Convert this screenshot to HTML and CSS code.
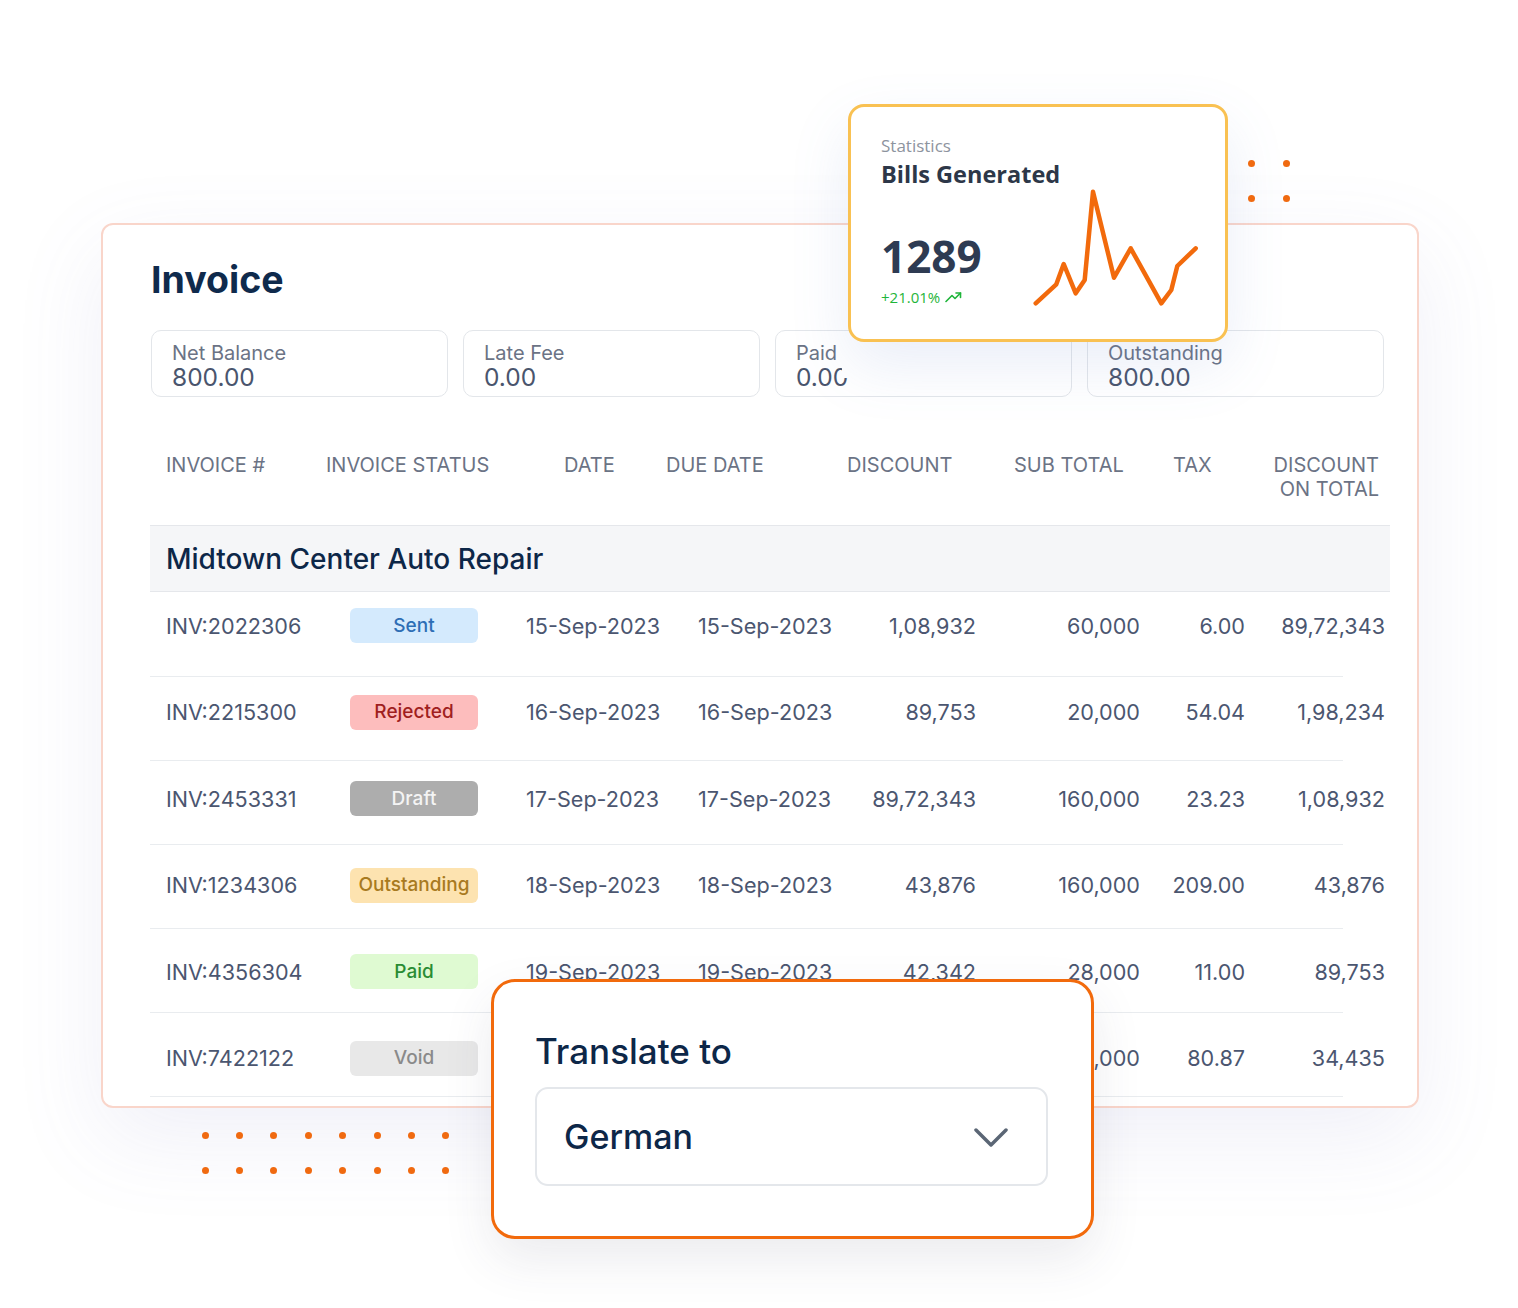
FILE: index.html
```html
<!DOCTYPE html>
<html lang="en">
<head>
<meta charset="utf-8">
<title>Invoice</title>
<link rel="stylesheet" href="styles.css">
</head>
<body>
<div class="page">
  <section class="invoice-card">
    <h1 class="title">Invoice</h1>
    <div class="summary">
      <div class="sum-box"><div class="sum-label">Net Balance</div><div class="sum-value">800.00</div></div>
      <div class="sum-box"><div class="sum-label">Late Fee</div><div class="sum-value">0.00</div></div>
      <div class="sum-box"><div class="sum-label">Paid</div><div class="sum-value">0.00</div></div>
      <div class="sum-box"><div class="sum-label">Outstanding</div><div class="sum-value">800.00</div></div>
    </div>
    <div class="table">
      <div class="thead">
        <div class="th">INVOICE #</div>
        <div class="th">INVOICE STATUS</div>
        <div class="th">DATE</div>
        <div class="th">DUE DATE</div>
        <div class="th">DISCOUNT</div>
        <div class="th">SUB TOTAL</div>
        <div class="th">TAX</div>
        <div class="th th-right">DISCOUNT<br>ON TOTAL</div>
      </div>
      <div class="group">Midtown Center Auto Repair</div>
      <div class="tbody">
        <div class="row">
          <div class="c">INV:2022306</div><div class="c"><span class="badge sent">Sent</span></div>
          <div class="c">15-Sep-2023</div><div class="c">15-Sep-2023</div>
          <div class="c r">1,08,932</div><div class="c r">60,000</div><div class="c r">6.00</div><div class="c r">89,72,343</div>
        </div>
        <div class="row">
          <div class="c">INV:2215300</div><div class="c"><span class="badge rejected">Rejected</span></div>
          <div class="c">16-Sep-2023</div><div class="c">16-Sep-2023</div>
          <div class="c r">89,753</div><div class="c r">20,000</div><div class="c r">54.04</div><div class="c r">1,98,234</div>
        </div>
        <div class="row">
          <div class="c">INV:2453331</div><div class="c"><span class="badge draft">Draft</span></div>
          <div class="c">17-Sep-2023</div><div class="c">17-Sep-2023</div>
          <div class="c r">89,72,343</div><div class="c r">160,000</div><div class="c r">23.23</div><div class="c r">1,08,932</div>
        </div>
        <div class="row">
          <div class="c">INV:1234306</div><div class="c"><span class="badge outstanding">Outstanding</span></div>
          <div class="c">18-Sep-2023</div><div class="c">18-Sep-2023</div>
          <div class="c r">43,876</div><div class="c r">160,000</div><div class="c r">209.00</div><div class="c r">43,876</div>
        </div>
        <div class="row">
          <div class="c">INV:4356304</div><div class="c"><span class="badge paid">Paid</span></div>
          <div class="c">19-Sep-2023</div><div class="c">19-Sep-2023</div>
          <div class="c r">42,342</div><div class="c r">28,000</div><div class="c r">11.00</div><div class="c r">89,753</div>
        </div>
        <div class="row">
          <div class="c">INV:7422122</div><div class="c"><span class="badge void">Void</span></div>
          <div class="c hidden-under">20-Sep-2023</div><div class="c hidden-under">20-Sep-2023</div>
          <div class="c r hidden-under">12,345</div><div class="c r">50,000</div><div class="c r">80.87</div><div class="c r">34,435</div>
        </div>
      </div>
    </div>
  </section>

  <div class="mask"></div>

  <div class="stats-card">
    <div class="stats-kicker">Statistics</div>
    <div class="stats-title">Bills Generated</div>
    <div class="stats-number">1289</div>
    <div class="stats-delta">+21.01%
      <svg class="trend" width="17" height="12" viewBox="0 0 17 12"><polyline points="1,10.5 7,4.5 10,7.5 15.5,2" fill="none" stroke="#1fb53a" stroke-width="1.6" stroke-linecap="round" stroke-linejoin="round"/><polyline points="11,2 15.5,2 15.5,6.5" fill="none" stroke="#1fb53a" stroke-width="1.6" stroke-linecap="round" stroke-linejoin="round"/></svg>
    </div>
    <svg class="spark" width="374" height="232" viewBox="0 0 374 232"><polyline points="184.7,196.3 205.3,177.3 212.7,157 224.7,186.3 233.7,173 242,84.7 263,170.7 279.7,141.3 310.3,196.3 320.3,183 326.3,159 344.7,141.3" fill="none" stroke="#f26a0c" stroke-width="4.5" stroke-linecap="round" stroke-linejoin="round"/></svg>
  </div>

  <div class="dots dots-top">
    <span></span><span></span><span></span><span></span>
  </div>
  <div class="dots dots-bottom">
    <span></span><span></span><span></span><span></span><span></span><span></span><span></span><span></span>
    <span></span><span></span><span></span><span></span><span></span><span></span><span></span><span></span>
  </div>

  <div class="translate-card">
    <div class="translate-label">Translate to</div>
    <div class="select">
      <span class="select-value">German</span>
      <svg class="chevron" width="34" height="20" viewBox="0 0 34 20"><polyline points="2,2 17,17 32,2" fill="none" stroke="#5b6675" stroke-width="3.5" stroke-linecap="round" stroke-linejoin="round"/></svg>
    </div>
  </div>
</div>
</body>
</html>
```
FILE: styles.css
```css
* { box-sizing: border-box; }
html, body { margin: 0; padding: 0; background: #ffffff; }
body { font-family: Inter, "Noto Sans", sans-serif; }

.page {
  position: relative;
  width: 1518px;
  height: 1308px;
  overflow: hidden;
  background: #ffffff;
}

.invoice-card {
  margin: 223px 0 0 101px;
  width: 1318px;
  height: 885px;
  border: 2px solid #f9d5ca;
  border-radius: 12px;
  background: #ffffff;
  padding: 33px 0 0 47px;
  box-shadow: 0 30px 90px rgba(110, 110, 190, 0.10);
}

.title {
  margin: 0 0 0 1px;
  font-size: 37.5px;
  line-height: 44px;
  font-weight: 700;
  color: #0f2a4c;
}

.summary {
  display: flex;
  gap: 15px;
  margin: 28px 0 0 1px;
}
.sum-box {
  width: 297px;
  height: 67px;
  border: 1px solid #e3e6ea;
  border-radius: 10px;
  padding: 11px 20px 0 20px;
}
.sum-label {
  font-size: 20px;
  line-height: 22px;
  color: #6b7385;
}
.sum-value {
  font-size: 24.5px;
  line-height: 26px;
  color: #4a556d;
}

.table { width: 1240px; margin-top: 56px; }

.thead {
  display: grid;
  grid-template-columns: 176px 238px 102px 181px 167px 159px 77px 129px;
  padding-bottom: 24px;
}
.th {
  font-size: 20px;
  line-height: 24px;
  color: #6b7385;
}
.thead .th:first-child { padding-left: 16px; }
.th-right { text-align: right; }

.group {
  height: 67px;
  border-top: 1px solid #e5e7eb;
  border-bottom: 1px solid #e5e7eb;
  background: #f5f6f8;
  display: flex;
  align-items: center;
  padding-left: 16px;
  font-size: 28px;
  font-weight: 500;
  color: #0d2748;
}

.tbody {
  height: 506px;
  padding-top: 16px;
  background-image: repeating-linear-gradient(to bottom, transparent 0, transparent 83px, #e9ecef 83px, #e9ecef 84px);
  background-size: 1193px 504px;
  background-position: 0 1px;
  background-repeat: no-repeat;
}

.row {
  width: 1235px;
  height: 86.6px;
  display: grid;
  grid-template-columns: 200px 176px 172px 160px 118px 164px 105px 140px;
  align-items: start;
}
.c {
  height: 35px;
  display: flex;
  align-items: center;
  font-size: 21.6px;
  line-height: 26px;
  color: #4b5670;
  white-space: nowrap;
}
.row .c:first-child { padding-left: 16px; }
.c.r { justify-content: flex-end; }
.hidden-under { visibility: hidden; }

.badge {
  display: flex;
  align-items: center;
  justify-content: center;
  width: 128px;
  height: 35px;
  border-radius: 6px;
  font-size: 19px;
  line-height: 22px;
  font-weight: 500;
}
.sent { background: #d4eafd; color: #2e6eb5; }
.rejected { background: #fdbdbd; color: #a01f1f; }
.draft { background: #adadad; color: #f4f4f4; }
.outstanding { background: #fde3b0; color: #a87a20; }
.paid { background: #dffad2; color: #2a8c34; }
.void { background: #e8e8e8; color: #8a8a8a; }

.mask {
  position: absolute;
  left: 842px;
  top: 342px;
  width: 34px;
  height: 36px;
  background: #ffffff;
}

.stats-card {
  position: absolute;
  left: 848px;
  top: 104px;
  width: 380px;
  height: 238px;
  border: 3px solid #f9c152;
  border-radius: 16px;
  background: #ffffff;
  padding: 29px 0 0 30px;
  font-family: "Open Sans", "Noto Sans", sans-serif;
  box-shadow: 0 24px 60px rgba(90, 120, 200, 0.13);
}
.stats-kicker {
  font-size: 17px;
  line-height: 20px;
  color: #8d939e;
}
.stats-title {
  margin-top: 4px;
  font-size: 23.5px;
  line-height: 28px;
  font-weight: 700;
  color: #2d3748;
}
.stats-number {
  margin-top: 43px;
  font-size: 44px;
  line-height: 50px;
  font-weight: 700;
  color: #2e3b52;
}
.stats-delta {
  margin-top: 7px;
  font-size: 15px;
  line-height: 18px;
  color: #1fb53a;
  display: flex;
  align-items: center;
  gap: 5px;
}
.spark {
  position: absolute;
  left: 0;
  top: 0;
}

.dots { position: absolute; display: grid; }
.dots span {
  width: 7px;
  height: 7px;
  border-radius: 50%;
  background: #f06a10;
}
.dots-top {
  left: 1247.5px;
  top: 159.5px;
  grid-template-columns: 7px 7px;
  column-gap: 28px;
  row-gap: 28px;
}
.dots-bottom {
  left: 201.8px;
  top: 1131.8px;
  grid-template-columns: repeat(8, 7px);
  column-gap: 27.35px;
  row-gap: 28.4px;
}

.translate-card {
  position: absolute;
  left: 491px;
  top: 979px;
  width: 603px;
  height: 260px;
  border: 3px solid #f26a0c;
  border-radius: 24px;
  background: #ffffff;
  padding: 48px 0 0 41px;
  box-shadow: 0 20px 50px rgba(60, 60, 90, 0.10);
}
.translate-label {
  font-size: 35px;
  line-height: 42px;
  font-weight: 500;
  color: #0d2748;
}
.select {
  margin-top: 15px;
  width: 513px;
  height: 99px;
  border: 2px solid #e4e7eb;
  border-radius: 13px;
  display: flex;
  align-items: center;
  justify-content: space-between;
  padding: 0 38px 0 27px;
}
.select-value {
  font-size: 34px;
  line-height: 40px;
  font-weight: 500;
  color: #0d2748;
}
.chevron { margin-top: 2px; }
```
